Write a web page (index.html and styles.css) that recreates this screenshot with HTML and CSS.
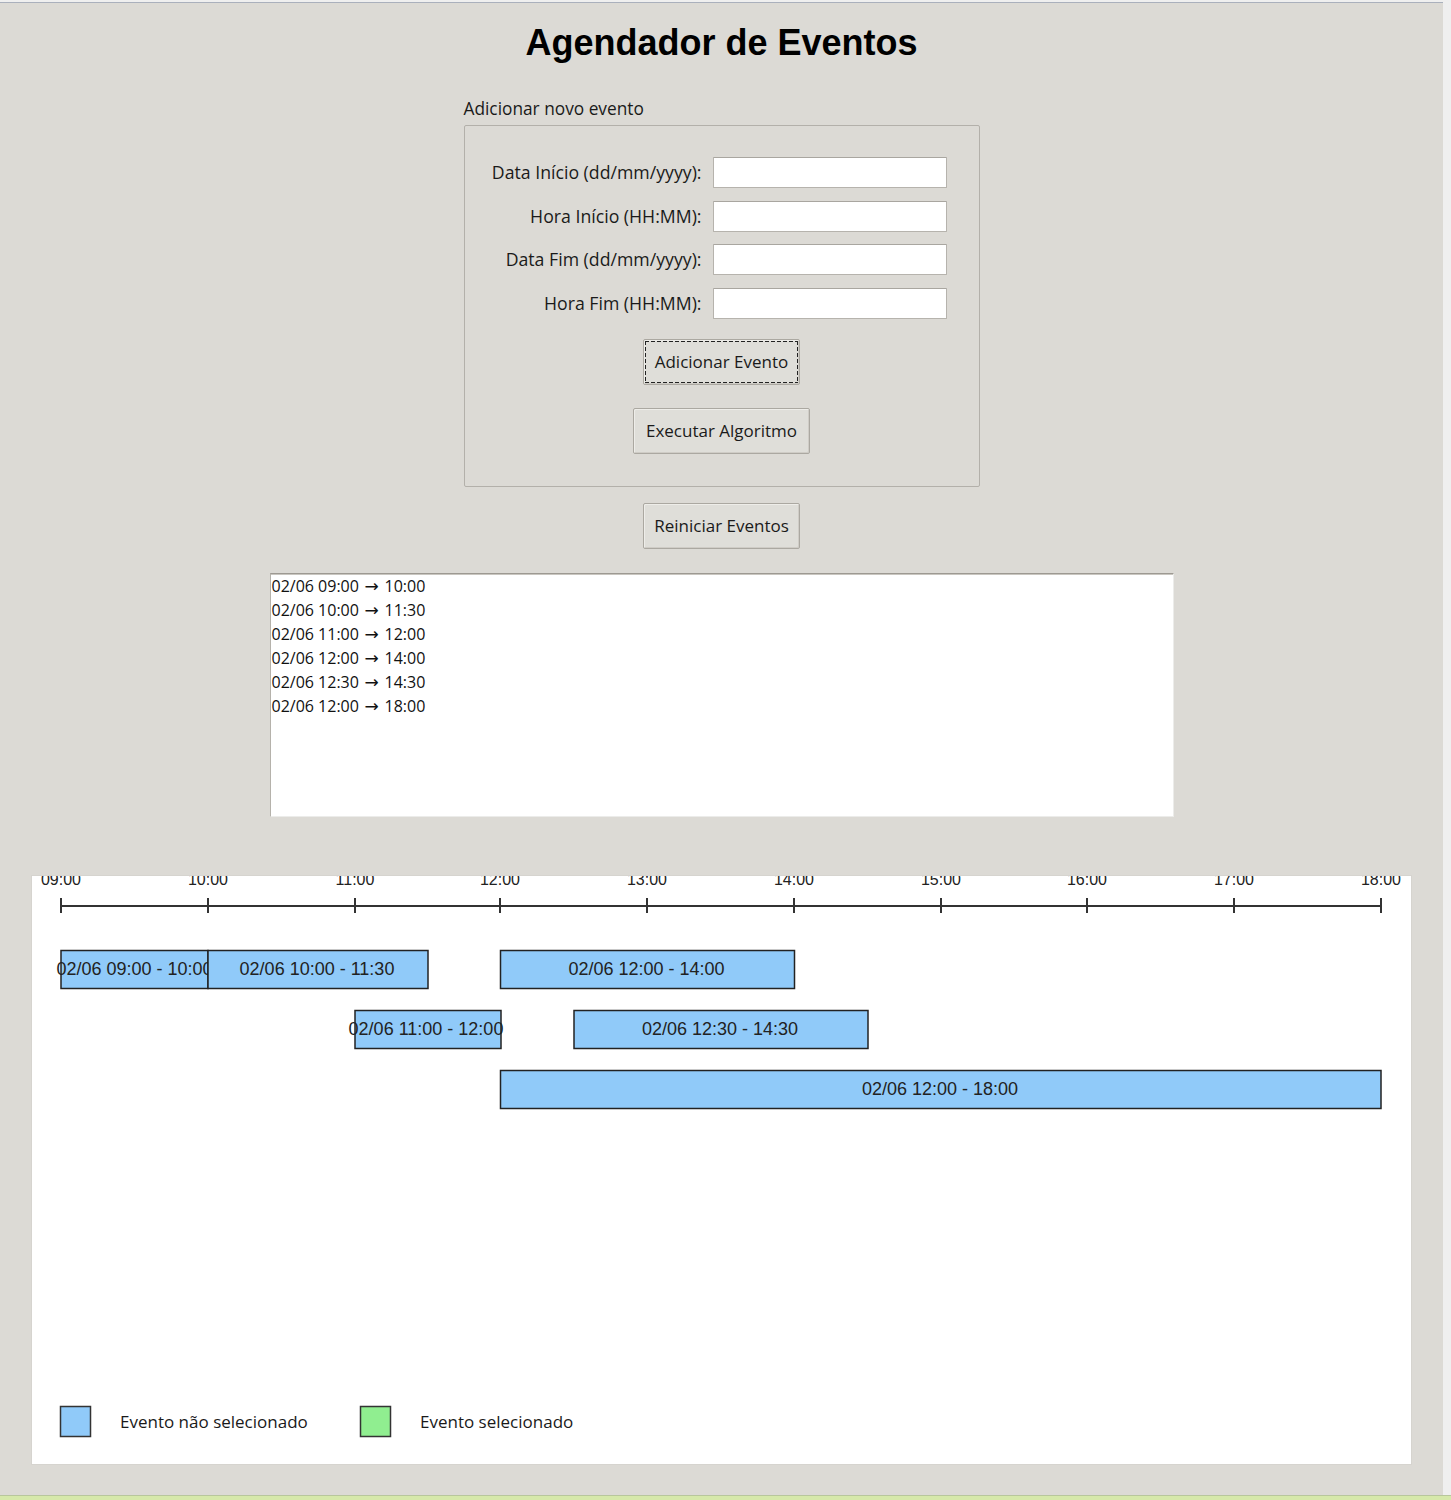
FILE: index.html
```
<!DOCTYPE html>
<html lang="pt">
<head>
<meta charset="utf-8">
<title>Agendador de Eventos</title>
<link rel="stylesheet" href="styles.css">
</head>
<body>
<div class="screen">
  <h1 class="title">Agendador de Eventos</h1>
  <section class="group">
    <div class="group-label">Adicionar novo evento</div>
    <div class="group-frame">
      <div class="form-grid">
        <label class="field-label">Data Início (dd/mm/yyyy):</label><div class="entry"></div>
        <label class="field-label">Hora Início (HH:MM):</label><div class="entry"></div>
        <label class="field-label">Data Fim (dd/mm/yyyy):</label><div class="entry"></div>
        <label class="field-label">Hora Fim (HH:MM):</label><div class="entry"></div>
      </div>
      <button class="btn btn-add"><span class="focus-ring">Adicionar Evento</span></button>
      <button class="btn btn-run">Executar Algoritmo</button>
    </div>
  </section>
  <button class="btn btn-reset">Reiniciar Eventos</button>
  <div class="listbox">
    <div class="list-item">02/06 09:00 <span class="arrow">→</span> 10:00</div>
    <div class="list-item">02/06 10:00 <span class="arrow">→</span> 11:30</div>
    <div class="list-item">02/06 11:00 <span class="arrow">→</span> 12:00</div>
    <div class="list-item">02/06 12:00 <span class="arrow">→</span> 14:00</div>
    <div class="list-item">02/06 12:30 <span class="arrow">→</span> 14:30</div>
    <div class="list-item">02/06 12:00 <span class="arrow">→</span> 18:00</div>
  </div>
  <div class="canvas">
    <svg class="timeline" width="1379" height="588" viewBox="0 0 1379 588">
      <g class="hours">
        <text x="29" y="9">09:00</text>
        <text x="176" y="9">10:00</text>
        <text x="323" y="9">11:00</text>
        <text x="468" y="9">12:00</text>
        <text x="615" y="9">13:00</text>
        <text x="762" y="9">14:00</text>
        <text x="909" y="9">15:00</text>
        <text x="1055" y="9">16:00</text>
        <text x="1202" y="9">17:00</text>
        <text x="1349" y="9">18:00</text>
      </g>
      <g class="axis">
        <line x1="29" y1="30" x2="1349" y2="30"/>
        <line x1="29" y1="22" x2="29" y2="37"/>
        <line x1="176" y1="22" x2="176" y2="37"/>
        <line x1="323" y1="22" x2="323" y2="37"/>
        <line x1="468" y1="22" x2="468" y2="37"/>
        <line x1="615" y1="22" x2="615" y2="37"/>
        <line x1="762" y1="22" x2="762" y2="37"/>
        <line x1="909" y1="22" x2="909" y2="37"/>
        <line x1="1055" y1="22" x2="1055" y2="37"/>
        <line x1="1202" y1="22" x2="1202" y2="37"/>
        <line x1="1349" y1="22" x2="1349" y2="37"/>
      </g>
      <g class="events">
        <rect class="bar" x="29" y="74.5" width="147" height="38"/>
        <text class="bar-text" x="102.5" y="99">02/06 09:00 - 10:00</text>
        <rect class="bar" x="176" y="74.5" width="220" height="38"/>
        <text class="bar-text" x="285" y="99">02/06 10:00 - 11:30</text>
        <rect class="bar" x="323" y="134.5" width="146" height="38"/>
        <text class="bar-text" x="394" y="159">02/06 11:00 - 12:00</text>
        <rect class="bar" x="468.5" y="74.5" width="294" height="38"/>
        <text class="bar-text" x="614.5" y="99">02/06 12:00 - 14:00</text>
        <rect class="bar" x="542" y="134.5" width="294" height="38"/>
        <text class="bar-text" x="688" y="159">02/06 12:30 - 14:30</text>
        <rect class="bar" x="468.5" y="194.5" width="880.5" height="38"/>
        <text class="bar-text" x="908" y="219">02/06 12:00 - 18:00</text>
      </g>
      <g class="legend">
        <rect class="swatch swatch-off" x="28.5" y="530.5" width="30" height="30"/>
        <text class="legend-text" x="88" y="552">Evento não selecionado</text>
        <rect class="swatch swatch-on" x="328.5" y="530.5" width="30" height="30"/>
        <text class="legend-text" x="388" y="552">Evento selecionado</text>
      </g>
    </svg>
  </div>
</div>
<div class="bottom-strip"></div>
</body>
</html>
```
FILE: styles.css
```
html, body {
  margin: 0;
  padding: 0;
}

body {
  background: #efefef;
  font-family: "Open Sans", "Noto Sans", sans-serif;
  font-size: 17px;
  color: #1a1a1a;
}

.screen {
  box-sizing: border-box;
  width: 1443px;
  height: 1493px;
  margin-top: 2px;
  border-top: 1px solid #aab0bc;
  background: #dcdad5;
  display: flex;
  flex-direction: column;
  align-items: center;
}

.title {
  margin: 19px 0 0;
  font-family: "Liberation Sans", Arial, sans-serif;
  font-weight: bold;
  font-size: 36px;
  line-height: 42px;
  color: #000;
}

.group {
  margin-top: 33px;
  width: 516px;
}

.group-label {
  font-size: 17.3px;
  line-height: 23px;
  height: 23px;
  margin-bottom: 5px;
  white-space: nowrap;
}

.group-frame {
  box-sizing: border-box;
  width: 516px;
  border: 1px solid #b3b0aa;
  border-radius: 2px;
  padding: 31px 0 32px;
  display: flex;
  flex-direction: column;
  align-items: center;
}

.form-grid {
  align-self: stretch;
  display: grid;
  grid-template-columns: 1fr 234px;
  grid-auto-rows: 31px;
  column-gap: 11px;
  row-gap: 12.67px;
  padding-right: 32px;
}

.field-label {
  justify-self: end;
  align-self: center;
  white-space: nowrap;
  font-size: 17.7px;
  line-height: 23px;
}

.entry {
  box-sizing: border-box;
  background: #fff;
  border: 1px solid #b6b3ad;
  border-top-color: #a9a6a0;
  border-radius: 1px;
}

.btn {
  box-sizing: border-box;
  display: flex;
  align-items: center;
  justify-content: center;
  padding: 0;
  height: 46px;
  font-family: inherit;
  font-size: 17px;
  color: #1a1a1a;
  background: #dfded9;
  border: 1px solid #aba8a1;
  border-radius: 2px;
  box-shadow: inset 1px 1px 0 #eeede9, inset -1px -1px 0 #cfccc6;
  white-space: nowrap;
}

.btn-add {
  margin-top: 20px;
  width: 157px;
  height: 46px;
  padding: 1px;
}

.focus-ring {
  box-sizing: border-box;
  flex: 1;
  align-self: stretch;
  display: flex;
  align-items: center;
  justify-content: center;
  background-image:
    repeating-linear-gradient(90deg, #222 0 4px, transparent 4px 6px),
    repeating-linear-gradient(90deg, #222 0 4px, transparent 4px 6px),
    repeating-linear-gradient(180deg, #222 0 4px, transparent 4px 6px),
    repeating-linear-gradient(180deg, #222 0 4px, transparent 4px 6px);
  background-size: 100% 1px, 100% 1px, 1px 100%, 1px 100%;
  background-position: left top, left bottom, left top, right top;
  background-repeat: no-repeat;
}

.btn-run {
  margin-top: 23px;
  width: 177px;
}

.btn-reset {
  margin-top: 16px;
  width: 157px;
}

.listbox {
  box-sizing: border-box;
  margin-top: 24px;
  width: 904px;
  height: 244px;
  background: #fff;
  border-top: 1px solid #9d9992;
  border-left: 1px solid #b5b2ab;
  border-right: 1px solid #ececea;
  border-bottom: 1px solid #ececea;
  box-shadow: inset 0 1px 0 #c9c6c0;
  padding-left: 1px;
}

.list-item {
  font-size: 16px;
  line-height: 24px;
  height: 24px;
  white-space: nowrap;
  color: #111;
}

.arrow {
  font-family: "DejaVu Sans", sans-serif;
  font-size: 17px;
  margin: 0 1.5px;
}

.canvas {
  box-sizing: border-box;
  margin-top: 58px;
  width: 1381px;
  height: 590px;
  background: #fff;
  border: 1px solid #d6d4cf;
}

.timeline {
  display: block;
  overflow: hidden;
}

.hours text {
  font-family: "Liberation Sans", Arial, sans-serif;
  font-size: 16px;
  fill: #222;
  text-anchor: middle;
}

.axis line {
  stroke: #333;
  stroke-width: 2;
}

.bar {
  fill: #90caf9;
  stroke: #222;
  stroke-width: 1.5;
}

.bar-text {
  font-family: "Liberation Sans", Arial, sans-serif;
  font-size: 18px;
  fill: #222;
  text-anchor: middle;
}

.swatch {
  stroke: #333;
  stroke-width: 1.5;
}

.swatch-off {
  fill: #90caf9;
}

.swatch-on {
  fill: #90ee90;
}

.legend-text {
  font-family: "Open Sans", "Noto Sans", sans-serif;
  font-size: 17px;
  fill: #1a1a1a;
}

.bottom-strip {
  box-sizing: border-box;
  height: 5px;
  border-top: 1px solid #b8c69c;
  background: #d6e8aa;
}
```
